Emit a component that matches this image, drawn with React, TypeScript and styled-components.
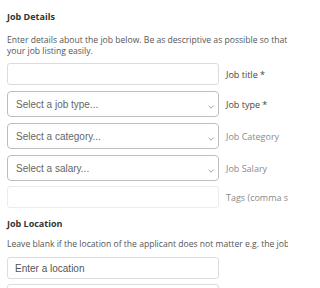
import styled, { createGlobalStyle } from 'styled-components'

const GlobalStyle = createGlobalStyle`
  html, body {
    margin: 0;
    padding: 0;
    width: 100%;
    background: #fff;
    overflow: hidden;
  }
`

const Page = styled.div`
  box-sizing: border-box;
  width: 288px;
  height: 288px;
  overflow: hidden;
  padding: 10px 0 0 7px;
  font-family: 'Open Sans', 'DejaVu Sans', sans-serif;
  color: #444;
`

const Heading = styled.h3<{ $top?: number }>`
  margin: ${({ $top = 0 }) => `${$top}px`} 0 0;
  font-size: 9px;
  line-height: 14px;
  font-weight: 700;
  color: #333;
`

const Description = styled.p<{ $top: number }>`
  margin: ${({ $top }) => `${$top}px`} 0 0;
  font-size: 8.6px;
  line-height: 11px;
  color: #555;
  white-space: nowrap;
`

const Row = styled.div<{ $top: number }>`
  display: flex;
  align-items: center;
  margin-top: ${({ $top }) => `${$top}px`};
`

const TextInput = styled.input<{ $faint?: boolean }>`
  box-sizing: border-box;
  flex: none;
  width: 212px;
  height: 22px;
  padding: 0 7px;
  border: 1px solid ${({ $faint }) => ($faint ? '#ececec' : '#dcdcdc')};
  border-radius: 3px;
  background: #fff;
  font-family: 'Liberation Sans', Arial, sans-serif;
  font-size: 10px;
  color: #555;
  outline: none;

  &::placeholder {
    color: #555;
  }
`

const SelectBox = styled.div`
  box-sizing: border-box;
  flex: none;
  position: relative;
  display: flex;
  align-items: center;
  width: 212px;
  height: 26px;
  padding: 0 8px;
  border: 1px solid #bdbdbd;
  border-radius: 4px;
  background: #fff;
  font-family: 'Liberation Sans', Arial, sans-serif;
  font-size: 10px;
  color: #666;

  svg {
    position: absolute;
    right: 4px;
    top: 13px;
  }
`

const FieldLabel = styled.span<{ $muted?: boolean }>`
  margin-left: 7px;
  font-size: 9px;
  white-space: nowrap;
  color: ${({ $muted }) => ($muted ? '#8a8a8a' : '#444')};
`

function Chevron() {
  return (
    <svg width="6" height="4" viewBox="0 0 6 4" fill="none">
      <path d="M0.5 0.8 L3 3.2 L5.5 0.8" stroke="#999" strokeWidth="0.9" />
    </svg>
  )
}

function Select({ placeholder }: { placeholder: string }) {
  return (
    <SelectBox>
      {placeholder}
      <Chevron />
    </SelectBox>
  )
}

export default function App() {
  return (
    <>
      <GlobalStyle />
      <Page>
        <Heading>Job Details</Heading>
        <Description $top={11}>
          Enter details about the job below. Be as descriptive as possible so that potential candidates can find
          <br />
          your job listing easily.
        </Description>

        <Row $top={6}>
          <TextInput />
          <FieldLabel>Job title *</FieldLabel>
        </Row>
        <Row $top={6}>
          <Select placeholder="Select a job type..." />
          <FieldLabel>Job type *</FieldLabel>
        </Row>
        <Row $top={6}>
          <Select placeholder="Select a category..." />
          <FieldLabel $muted>Job Category</FieldLabel>
        </Row>
        <Row $top={6}>
          <Select placeholder="Select a salary..." />
          <FieldLabel $muted>Job Salary</FieldLabel>
        </Row>
        <Row $top={5}>
          <TextInput $faint />
          <FieldLabel $muted>Tags (comma separated)</FieldLabel>
        </Row>

        <Heading $top={9}>Job Location</Heading>
        <Description $top={8}>
          Leave blank if the location of the applicant does not matter e.g. the job can be done remotely.
        </Description>
        <Row $top={7}>
          <TextInput placeholder="Enter a location" />
        </Row>
        <Row $top={5}>
          <TextInput />
        </Row>
      </Page>
    </>
  )
}
